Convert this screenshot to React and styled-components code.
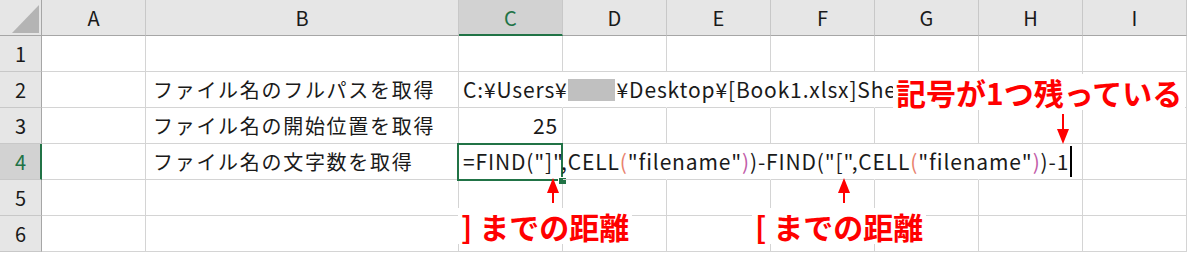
import styled, { createGlobalStyle } from "styled-components";

const GlobalStyle = createGlobalStyle`
    body {
        margin: 0;
        background: #ffffff;
        font-family: "Noto Sans CJK JP", "Noto Sans", sans-serif;
    }
`;

const columns = ["A", "B", "C", "D", "E", "F", "G", "H", "I"];
const GREEN = "#217346";
const RED = "#ff0000";

export default function App() {
    return (
        <>
            <GlobalStyle />
            <Sheet>
                <Grid>
                    <Corner>
                        <svg width="42" height="36">
                            <polygon points="39,5 39,33 12,33" fill="#b4b4b4" />
                        </svg>
                    </Corner>
                    {columns.map((c) => (
                        <ColHead key={c} $active={c === "C"}>{c}</ColHead>
                    ))}

                    <RowHead>1</RowHead>
                    {columns.map((c) => <Cell key={c} />)}

                    <RowHead>2</RowHead>
                    <Cell />
                    <Cell><Text $jp>ファイル名のフルパスを取得</Text></Cell>
                    <Cell $noRight>
                        <Text>C:¥Users¥<Masked />¥Desktop¥[Book1.xlsx]Sheet1</Text>
                    </Cell>
                    <Cell $noRight />
                    <Cell $noRight />
                    <Cell $noRight />
                    <Cell $noRight />
                    <Cell />
                    <Cell />

                    <RowHead>3</RowHead>
                    <Cell />
                    <Cell><Text $jp>ファイル名の開始位置を取得</Text></Cell>
                    <Cell $right><Text>25</Text></Cell>
                    <Cell />
                    <Cell />
                    <Cell />
                    <Cell />
                    <Cell />
                    <Cell />

                    <RowHead $active>4</RowHead>
                    <Cell />
                    <Cell><Text $jp>ファイル名の文字数を取得</Text></Cell>
                    <Cell $noRight>
                        <Selection>
                            <FillHandle />
                        </Selection>
                        <Text>
                            =FIND("]",CELL<Paren $c="#e9826e">(</Paren>"filename"<Paren $c="#c25ca8">)</Paren>)-FIND("[",CELL<Paren $c="#e9826e">(</Paren>"filename"<Paren $c="#c25ca8">)</Paren>)-1<Caret />
                        </Text>
                    </Cell>
                    <Cell $noRight />
                    <Cell $noRight />
                    <Cell $noRight />
                    <Cell $noRight />
                    <Cell />
                    <Cell />

                    <RowHead>5</RowHead>
                    {columns.map((c) => <Cell key={c} />)}

                    <RowHead>6</RowHead>
                    {columns.map((c) => <Cell key={c} />)}
                </Grid>

                <Note $left={893} $top={74}>記号が1つ残っている</Note>
                <Arrow $left={1057} $top={114} $down />
                <Arrow $left={547} $top={178} />
                <Arrow $left={838} $top={178} />
                <Note $left={458} $top={208}>] までの距離</Note>
                <Note $left={752} $top={208}>[ までの距離</Note>
            </Sheet>
        </>
    );
}

function Arrow({ $left, $top, $down }) {
    return (
        <ArrowBox $left={$left} $top={$top}>
            <svg width="12" height="30" viewBox="0 0 12 30">
                {$down ? (
                    <>
                        <rect x="5" y="0" width="2" height="18" fill={RED} />
                        <polygon points="0,15 12,15 6,30" fill={RED} />
                    </>
                ) : (
                    <>
                        <polygon points="6,0 12,15 0,15" fill={RED} />
                        <rect x="5" y="12" width="2" height="13" fill={RED} />
                    </>
                )}
            </svg>
        </ArrowBox>
    );
}

const Sheet = styled.div`
    position: relative;
    width: 1188px;
    height: 253px;
    overflow: hidden;
`;

const Grid = styled.div`
    display: grid;
    grid-template-columns: 42px 104px 313px repeat(7, 104px);
    grid-template-rows: repeat(7, 36px);
    color: #1a1a1a;
`;

const Corner = styled.div`
    background: #e6e6e6;
    border-right: 1px solid #a6a6a6;
    border-bottom: 1px solid #a6a6a6;
    box-sizing: border-box;
    display: flex;
`;

const ColHead = styled.div`
    box-sizing: border-box;
    background: ${(p) => (p.$active ? "#d2d2d2" : "#e6e6e6")};
    color: ${(p) => (p.$active ? GREEN : "#1a1a1a")};
    border-right: 1px solid #c8c8c8;
    border-bottom: ${(p) => (p.$active ? `2px solid ${GREEN}` : "1px solid #a6a6a6")};
    display: flex;
    align-items: center;
    justify-content: center;
    font-size: 20px;
    padding-top: ${(p) => (p.$active ? "1px" : "0")};
`;

const RowHead = styled.div`
    box-sizing: border-box;
    background: ${(p) => (p.$active ? "#d2d2d2" : "#e6e6e6")};
    color: ${(p) => (p.$active ? GREEN : "#1a1a1a")};
    border-right: ${(p) => (p.$active ? `2px solid ${GREEN}` : "1px solid #a6a6a6")};
    border-bottom: 1px solid #c8c8c8;
    display: flex;
    align-items: center;
    justify-content: center;
    font-size: 20px;
    padding-left: ${(p) => (p.$active ? "1px" : "0")};
`;

const Cell = styled.div`
    position: relative;
    box-sizing: border-box;
    border-right: 1px solid ${(p) => (p.$noRight ? "transparent" : "#d4d4d4")};
    border-bottom: 1px solid #d4d4d4;
    display: flex;
    align-items: center;
    justify-content: ${(p) => (p.$right ? "flex-end" : "flex-start")};
    padding: 0 4px;
    white-space: nowrap;
    overflow: visible;
    min-width: 0;
    z-index: ${(p) => (p.$noRight ? 1 : 0)};
`;

const Text = styled.span`
    font-size: ${(p) => (p.$jp ? "20px" : "21px")};
    letter-spacing: ${(p) => (p.$jp ? "1.7px" : "0.85px")};
    padding-left: ${(p) => (p.$jp ? "3px" : "0")};
    color: #1a1a1a;
    line-height: 1;
    display: inline-flex;
    align-items: center;
    position: relative;
    z-index: 2;
`;

const Masked = styled.span`
    display: inline-block;
    width: 47px;
    height: 22px;
    background: #c0c0c0;
    margin: 0 2px 0 0;
`;

const Paren = styled.span`
    color: ${(p) => p.$c};
`;

const Caret = styled.span`
    display: inline-block;
    width: 2px;
    height: 31px;
    background: #000;
    margin-left: 1px;
`;

const Selection = styled.div`
    position: absolute;
    left: -2px;
    top: -1px;
    width: 106px;
    height: 38px;
    box-sizing: border-box;
    border: 2px solid ${GREEN};
    pointer-events: none;
    z-index: 1;
`;

const FillHandle = styled.div`
    position: absolute;
    right: -5px;
    bottom: -5px;
    width: 7px;
    height: 6px;
    background: ${GREEN};
    border-left: 1px solid #fff;
    border-top: 1px solid #fff;
`;

const Note = styled.div`
    position: absolute;
    left: ${(p) => p.$left}px;
    top: ${(p) => p.$top}px;
    background: #ffffff;
    color: ${RED};
    font-weight: 700;
    font-size: 30px;
    line-height: 36px;
    padding: 0 3px;
    white-space: nowrap;
    z-index: 5;
`;

const ArrowBox = styled.div`
    position: absolute;
    left: ${(p) => p.$left}px;
    top: ${(p) => p.$top}px;
    display: flex;
    z-index: 6;
`;
